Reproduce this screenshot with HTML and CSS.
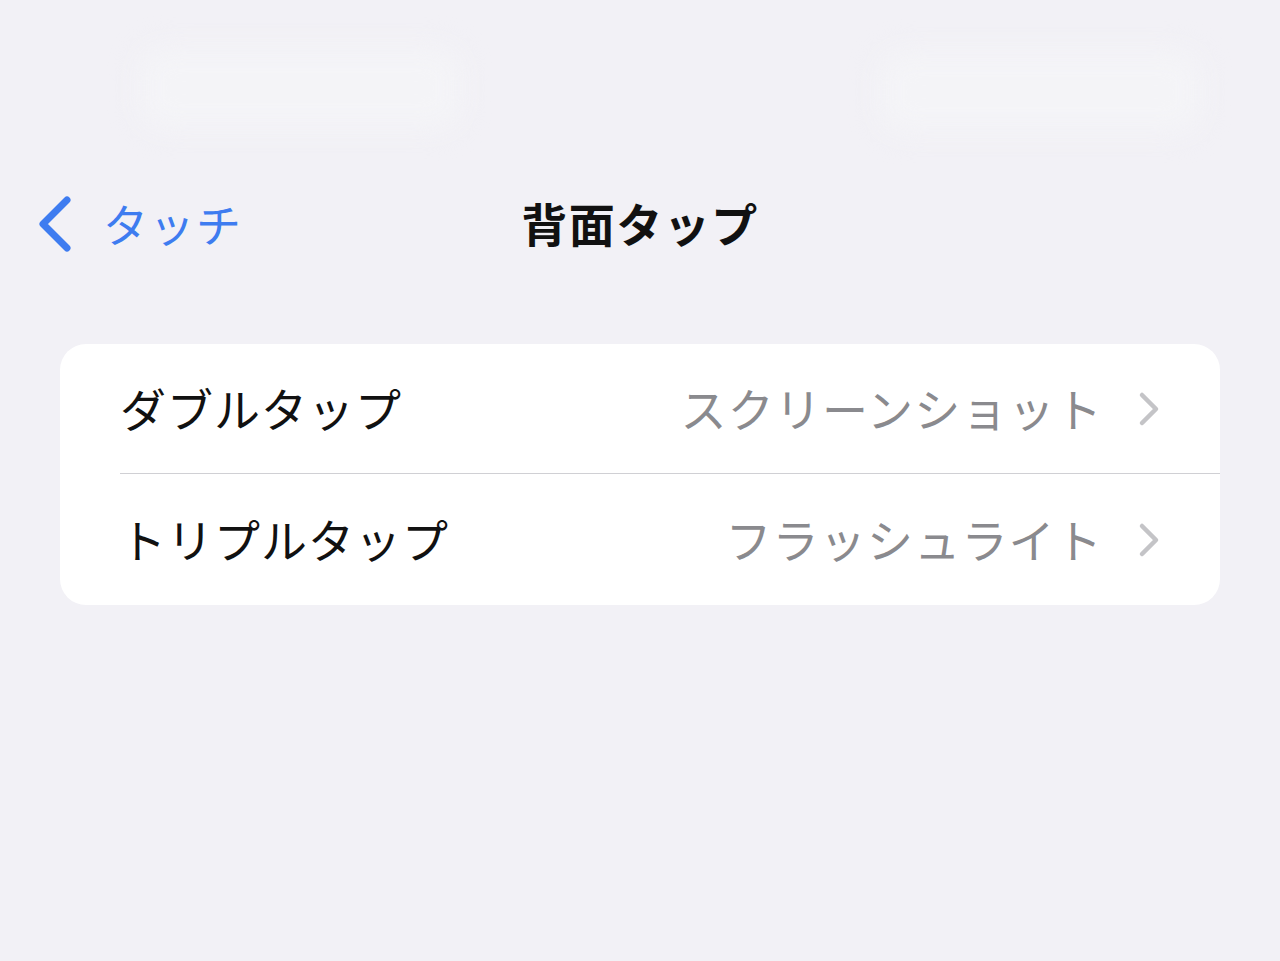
FILE: index.html
```html
<!DOCTYPE html>
<html lang="ja">
<head>
<meta charset="utf-8">
<title>背面タップ</title>
<link rel="stylesheet" href="styles.css">
</head>
<body>
<div class="status">
  <div class="blob blob-left"></div>
  <div class="blob blob-right"></div>
</div>
<header class="nav">
  <div class="back">
    <svg class="back-icon" width="34" height="56" viewBox="0 0 34 56"><polyline points="29,4 5,28 29,52" fill="none" stroke="#3e7cf0" stroke-width="7" stroke-linecap="round" stroke-linejoin="round"/></svg>
    <span class="back-label">タッチ</span>
  </div>
  <h1 class="title">背面タップ</h1>
</header>
<main class="card">
  <div class="row">
    <div class="row-inner sep">
      <span class="label">ダブルタップ</span>
      <span class="value">スクリーンショット</span>
      <svg class="chev" width="24" height="36" viewBox="0 0 24 36"><polyline points="5,4 19,18 5,32" fill="none" stroke="#c4c4c7" stroke-width="4.5" stroke-linecap="round" stroke-linejoin="round"/></svg>
    </div>
  </div>
  <div class="row">
    <div class="row-inner">
      <span class="label">トリプルタップ</span>
      <span class="value">フラッシュライト</span>
      <svg class="chev" width="24" height="36" viewBox="0 0 24 36"><polyline points="5,4 19,18 5,32" fill="none" stroke="#c4c4c7" stroke-width="4.5" stroke-linecap="round" stroke-linejoin="round"/></svg>
    </div>
  </div>
</main>
</body>
</html>
```
FILE: styles.css
```css
* { box-sizing: border-box; }
html, body { margin: 0; padding: 0; }
body {
  background: #f2f1f6;
  font-family: "Noto Sans CJK JP", "Noto Sans", sans-serif;
  width: 1280px;
  height: 961px;
  overflow: hidden;
}
.status {
  height: 160px;
  display: flex;
  justify-content: space-between;
  padding: 48px 80px 0 140px;
}
.blob {
  height: 80px;
  background: #f4f4f7;
  border-radius: 24px;
  filter: blur(14px);
}
.blob-left { width: 320px; }
.blob-right { width: 320px; margin-top: 4px; }
.nav {
  height: 130px;
  position: relative;
  display: flex;
  align-items: center;
  justify-content: center;
}
.back {
  position: absolute;
  left: 38px;
  top: 36px;
  display: flex;
  align-items: center;
  gap: 31px;
  color: #3e7cf0;
}
.back-icon { display: block; }
.back-label {
  font-size: 45px;
  line-height: 56px;
  letter-spacing: 1.5px;
}
.title {
  margin: 0 0 6px;
  font-size: 46px;
  font-weight: 700;
  color: #111;
  line-height: 56px;
  letter-spacing: 1.5px;
}
.card {
  margin: 54px 60px 0;
  background: #fff;
  border-radius: 26px;
  overflow: hidden;
}
.row {
  padding-left: 60px;
  height: 130px;
}
.row + .row { height: 131px; }
.row-inner {
  height: 100%;
  display: flex;
  align-items: center;
  padding-right: 59px;
}
.row-inner.sep { border-bottom: 1px solid #d0d0d4; }
.label {
  flex: 1;
  font-size: 46px;
  color: #111;
  line-height: 56px;
  letter-spacing: 1px;
  margin-bottom: 4px;
}
.value {
  font-size: 46px;
  color: #8a8a8e;
  line-height: 56px;
  letter-spacing: 1.2px;
  margin-right: 34px;
  margin-bottom: 4px;
}
.chev { display: block; }
```
